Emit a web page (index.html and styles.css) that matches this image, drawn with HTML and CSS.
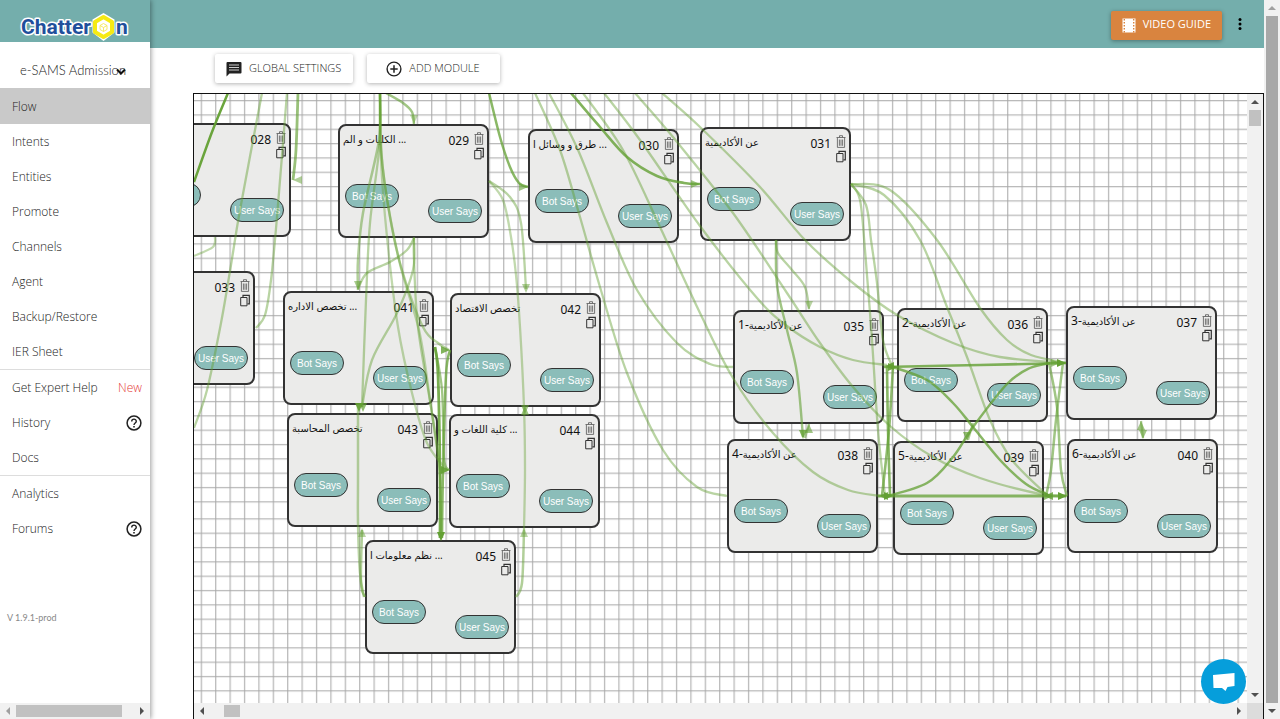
FILE: index.html
```html
<!DOCTYPE html>
<html lang="en">
<head>
<meta charset="utf-8">
<title>ChatterOn - Flow</title>
<link rel="stylesheet" href="styles.css">
</head>
<body>
<svg class="defs" aria-hidden="true">
  <symbol id="i-trash" viewBox="0 0 10 13"><path d="M0.5 2.5H9.5M3.5 2.3V0.7H6.5V2.3M1.4 2.8V12.4H8.6V2.8M3.4 4.5V10.8M5 4.5V10.8M6.6 4.5V10.8" fill="none" stroke="#555" stroke-width="0.8"/></symbol>
  <symbol id="i-copy" viewBox="0 0 10 12"><path d="M0.7 3H7V11.3H0.7Z" fill="none" stroke="#333"/><path d="M3 2.5V0.8H9.3V9.3H7.5" fill="none" stroke="#333" stroke-width="1.2"/></symbol>
  <symbol id="i-help" viewBox="0 0 16 16"><circle cx="8" cy="8" r="6.9" fill="none" stroke="#222" stroke-width="1.5"/><path d="M5.7 6.4C5.7 3.4 10.3 3.4 10.3 6.3C10.3 8 8 8 8 9.9" fill="none" stroke="#222" stroke-width="1.4"/><path d="M7.2 11H8.8V12.6H7.2Z" fill="#222"/></symbol>
</svg>
<div class="app">
  <aside class="sidebar">
    <div class="brand">
      <svg class="logo" viewBox="0 0 112 30" role="img" aria-label="ChatterOn">
        <g class="logo-text">
          <text x="72" y="22" text-anchor="end">Chatter</text>
          <text x="97" y="22">n</text>
        </g>
        <path d="M84.500 1L95.500 7.500V20.500L84.500 29L73.500 20.500V7.500Z" fill="#fff"/>
        <path d="M84.500 5L93 10V20L84.500 25L76 20V10Z" fill="#fff" stroke="#f5ea14" stroke-width="4" stroke-linejoin="round"/>
        <path d="M84.500 11.500L88 13.500V17.500L84.500 19.500L81 17.500V13.500ZM81 13.500L84.500 15.500L88 13.500M84.500 15.500V19.500" fill="none" stroke="#f5e85a" stroke-width="0.9"/>
      </svg>
    </div>
    <div class="project">
      <select class="project-select" aria-label="Project"><option>e-SAMS Admission</option></select>
      <svg class="project-arrow" viewBox="0 0 10 8" aria-hidden="true"><path d="M1 1.500L5 5.500L9 1.500" fill="none" stroke="#111" stroke-width="2"/></svg>
    </div>
    <nav class="menu">
      <a class="item active" href="#">Flow</a>
      <a class="item" href="#">Intents</a>
      <a class="item" href="#">Entities</a>
      <a class="item" href="#">Promote</a>
      <a class="item" href="#">Channels</a>
      <a class="item" href="#">Agent</a>
      <a class="item" href="#">Backup/Restore</a>
      <a class="item" href="#">IER Sheet</a>
      <a class="item ruled" href="#">Get Expert Help <span class="new">New</span></a>
      <a class="item" href="#">History <svg class="help"><use href="#i-help"/></svg></a>
      <a class="item" href="#">Docs</a>
      <a class="item ruled" href="#">Analytics</a>
      <a class="item" href="#">Forums <svg class="help"><use href="#i-help"/></svg></a>
    </nav>
    <p class="version">V 1.9.1-prod</p>
    <div class="hbar"><i class="arrow left dim"></i><div class="track"><div class="thumb wide"></div></div><i class="arrow right"></i></div>
  </aside>

  <div class="page">
    <header class="topbar">
      <button class="video" type="button">
        <svg class="film" viewBox="0 0 14 15" aria-hidden="true"><path d="M0.500 0.500H13.500V14.500H0.500Z" fill="#fff"/><path d="M2.300 1V14.500M11.700 1V14.500" stroke="#d9843f" stroke-width="1.400" stroke-dasharray="1.400 1.600"/></svg>
        <span class="video-label">VIDEO GUIDE</span>
      </button>
      <button class="more" type="button" aria-label="More"><svg class="dots" viewBox="0 0 4 12"><circle cx="2" cy="1.500" r="1.500"/><circle cx="2" cy="6" r="1.500"/><circle cx="2" cy="10.500" r="1.500"/></svg></button>
    </header>
    <div class="toolbar">
      <button class="tool" type="button">
        <svg class="tool-icon" viewBox="0 0 16 16" aria-hidden="true"><path d="M1.500 1H14.500Q15.500 1 15.500 2V11.500Q15.500 12.500 14.500 12.500H3.500L0.500 15.500V2Q0.500 1 1.500 1Z" fill="#222"/><path d="M3 4H13M3 6.500H13M3 9H13" stroke="#ccc" stroke-width="1.200"/></svg>
        <span class="tool-label">GLOBAL SETTINGS</span>
      </button>
      <button class="tool second" type="button">
        <svg class="tool-icon" viewBox="0 0 16 16" aria-hidden="true"><circle cx="8" cy="8" r="6.900" fill="none" stroke="#222" stroke-width="1.400"/><path d="M8 4.300V11.700M4.300 8H11.700" stroke="#222" stroke-width="1.500"/></svg>
        <span class="tool-label">ADD MODULE</span>
      </button>
    </div>
    <main class="canvas-frame">
      <div class="canvas-row">
        <div class="canvas" id="canvas">
          <svg class="layer" aria-hidden="true">
            <defs>
              <pattern id="cols" patternUnits="userSpaceOnUse" x="6.700" width="14.400" height="20"><path d="M0.700 0V20" stroke="#a6a6a6"/></pattern>
              <pattern id="rows" patternUnits="userSpaceOnUse" y="6" width="20" height="14.330"><path d="M0 0.700H20" stroke="#a6a6a6"/></pattern>
              <pattern id="rows-low" patternUnits="userSpaceOnUse" y="8.700" width="20" height="14.330"><path d="M0 0.700H20" stroke="#a6a6a6"/></pattern>
            </defs>
            <rect width="100%" height="100%" fill="url(#cols)"/>
            <rect width="100%" height="414" fill="url(#rows)"/>
            <rect y="422" width="100%" height="100%" fill="url(#rows-low)"/>
          </svg>
          <div id="nodes"></div>
          <svg class="layer" aria-hidden="true"><g id="edges" transform="translate(-194 -94)"></g></svg>
        </div>
        <div class="vbar"><i class="arrow up"></i><div class="track"><div class="thumb small"></div></div><i class="arrow down"></i></div>
      </div>
      <div class="hbar inner"><i class="arrow left"></i><div class="track"><div class="thumb small"></div></div><i class="arrow right"></i><span class="corner"></span></div>
    </main>
  </div>
  <div class="vbar outer"><i class="arrow up dim"></i><div class="track"><div class="thumb full"></div></div><i class="arrow down"></i></div>
</div>
<button class="chat" type="button" aria-label="Chat"><svg class="chat-icon" viewBox="0 0 24 20"><path d="M1 3L22.500 1V14L15.500 15L13.500 19L10 16L1.500 16Z" fill="#fff"/></svg></button>
<script src="flow.js"></script>
</body>
</html>
```
FILE: styles.css
```css
* { box-sizing: border-box; }
body { margin: 0; font-family: Lato, "Open Sans", sans-serif; font-size: 14px; color: #444; background: #fff; overflow: hidden; }
button { font: inherit; border: 0; padding: 0; cursor: pointer; }
.defs { position: absolute; width: 0; height: 0; }
.app { display: flex; height: 100vh; }

.sidebar { flex: none; width: 150px; display: flex; flex-direction: column; background: #fff; box-shadow: 1px 0 5px rgba(0,0,0,.4); z-index: 2; }
.brand { height: 42px; background: #74aeac; padding: 12px 0 0 19px; }
.logo { display: block; width: 112px; height: 30px; overflow: visible; }
.logo-text { font: 700 21px Roboto, sans-serif; fill: #1f4f9c; stroke: #fff; stroke-width: 3px; paint-order: stroke; stroke-linejoin: round; }
.project { position: relative; height: 46px; padding: 17px 20px 0; }
.project-select { appearance: none; border: 0; padding: 0; background: none; width: 110px; height: 22px; font: 300 13px Lato, sans-serif; color: #222; }
.project-arrow { position: absolute; right: 24px; top: 26px; width: 10px; height: 8px; }
.menu { display: flex; flex-direction: column; }
.item { display: flex; align-items: center; justify-content: space-between; height: 35px; padding: 0 8px 0 12px; color: #222; text-decoration: none; font: 300 12px "Open Sans", sans-serif; white-space: nowrap; }
.item.active { height: 36px; background: #c9c9c9; }
.item.ruled { height: 36px; border-top: 1px solid #ddd; }
.new { color: #e53935; }
.help { width: 16px; height: 16px; }
.version { margin: 64px 0 0 7px; font-size: 9px; line-height: 16px; color: #888; }

.hbar, .vbar { display: flex; background: #f1f1f1; flex: none; }
.hbar { height: 16px; align-items: center; }
.sidebar .hbar { margin-top: auto; }
.vbar { width: 16px; flex-direction: column; align-items: center; }
.track { flex: 1; }
.arrow { flex: none; width: 16px; height: 16px; display: grid; place-items: center; }
.arrow::after { content: ""; border: 4px solid transparent; }
.arrow.left::after { border-right-color: #505050; border-left-width: 0; }
.arrow.right::after { border-left-color: #505050; border-right-width: 0; }
.arrow.up::after { border-bottom-color: #505050; border-top-width: 0; }
.arrow.down::after { border-top-color: #505050; border-bottom-width: 0; }
.arrow.dim { opacity: .5; }
.thumb { background: #c1c1c1; width: 12px; height: 12px; }
.thumb.wide { width: 90%; }
.hbar .small { width: 16px; margin-left: 14px; }
.vbar .small { height: 16px; }
.thumb.full { height: 100%; background: #a8a8a8; }
.corner { width: 16px; height: 16px; background: #dcdcdc; }

.page { flex: 1; min-width: 0; display: flex; flex-direction: column; }
.topbar { height: 48px; flex: none; background: #74aeac; display: flex; justify-content: flex-end; align-items: flex-start; padding: 11px 19px 0 0; gap: 13px; }
.video { display: flex; align-items: center; gap: 7px; height: 29px; padding: 0 11px; background: #d9843f; color: #fff; border-radius: 2px; box-shadow: 0 1px 4px rgba(0,0,0,.35); }
.video-label { font: 11px/26px "Open Sans", sans-serif; align-self: flex-start; }
.film { width: 14px; height: 15px; }
.more { background: none; width: 10px; height: 26px; }
.dots { width: 4px; height: 12px; }
.toolbar { display: flex; gap: 14px; padding: 6px 0 10px 65px; }
.tool { display: flex; align-items: center; gap: 7px; height: 29px; padding: 0 12px 0 11px; background: #fff; border-radius: 2px; box-shadow: 0 1px 4px rgba(0,0,0,.3); }
.tool.second { padding: 0 20px 0 19px; }
.tool-icon { width: 16px; height: 16px; }
.tool-label { font: 300 11px/27px "Open Sans", sans-serif; color: #222; align-self: flex-start; }

.canvas-frame { flex: 1; min-height: 0; margin-left: 43px; border: 1px solid #111; border-bottom: 0; display: flex; flex-direction: column; }
.canvas-row { flex: 1; min-height: 0; display: flex; }
.canvas { flex: 1; position: relative; overflow: hidden; }
.layer { position: absolute; inset: 0; width: 100%; height: 100%; pointer-events: none; }

.node { position: absolute; width: 151px; height: 114px; border: 2px solid #333; border-radius: 8px; background: #ebebea; padding: 6px 3px 0 3px; }
.node-head { display: flex; align-items: flex-start; height: 52px; font: 12px/18px "Noto Sans", "DejaVu Sans", sans-serif; color: #111; }
.node-title { flex: 1; white-space: nowrap; font-size: 10px; line-height: 14px; }
.node-index { font-size: 12px; }
.node-tools { display: flex; flex-direction: column; gap: 2px; margin-left: 5px; }
.node-tool { width: 10px; height: 13px; background: none; display: block; }
.node-tool svg { display: block; width: 10px; height: 13px; }
.pills { display: flex; justify-content: space-between; align-items: flex-start; padding: 0 2px 0 2px; }
.pill { width: 54px; height: 24px; border: 1px solid #333; border-radius: 12px; background: #8bbdb9; color: #fff; font: 10px "Liberation Sans", sans-serif; white-space: nowrap; }
.pill.user { margin-top: 15px; }

.chat { position: absolute; right: 34px; bottom: 15px; width: 45px; height: 45px; border-radius: 50%; background: #069edb; display: grid; place-items: center; z-index: 3; }
.chat-icon { width: 24px; height: 20px; }
```
FILE: flow.js
```js
const nodes = [
  ["028", "", 140, 123], ["029", "الكليات و الم ...", 338, 124], ["030", "طرق و وسائل ا ...", 528, 129],
  ["031", "عن الأكاديمية", 700, 127], ["033", "", 104, 271], ["041", "تخصص الاداره ...", 283, 291],
  ["042", "تخصص الاقتصاد", 450, 293], ["043", "تخصص المحاسبة", 287, 413], ["044", "كلية اللغات و ...", 449, 414],
  ["045", "نظم معلومات ا ...", 365, 540], ["035", "عن الأكاديمية-1", 733, 310], ["036", "عن الأكاديمية-2", 897, 308],
  ["037", "عن الأكاديمية-3", 1066, 306], ["038", "عن الأكاديمية-4", 727, 439], ["039", "عن الأكاديمية-5", 893, 441],
  ["040", "عن الأكاديمية-6", 1067, 439]
];
// Canvas origin in flow coordinates
const ox = 194, oy = 94;
document.getElementById("nodes").innerHTML = nodes.map(([id, title, x, y]) => `
  <section class="node" style="left:${x - ox}px;top:${y - oy}px">
    <div class="node-head"><span class="node-title">${title.replace(/-\d/, m => `<span class="node-index">${m}</span>`)}</span><span>${id}</span>
      <div class="node-tools">
        <button class="node-tool" type="button" aria-label="Delete"><svg><use href="#i-trash"/></svg></button>
        <button class="node-tool" type="button" aria-label="Copy"><svg><use href="#i-copy"/></svg></button>
      </div>
    </div>
    <div class="pills"><button class="pill" type="button" aria-label="Bot Says">${x < ox ? "" : "Bot Says"}</button><button class="pill user" type="button">User Says</button></div>
  </section>`).join("");

// Each edge: opacity, width, then points the curve runs through
const edges = [
  [.95, 2.5, 228,93, 212,132, 194,182],
  [.45, 2.3, 262,93, 240,210, 231,265, 221,323, 207,390, 194,428],
  [.45, 2.3, 287,93, 277,217, 271,280, 265,315, 256,328],
  [.65, 2.8, 298,93, 296,150, 293,180],
  [.4, 2.3, 215,237, 213,247, 194,256],
  [.5, 2.5, 380,93, 379,140, 363,213, 358,260, 358,290],
  [.45, 2.3, 380,93, 379,150, 370,223, 366,300, 362,407],
  [.4, 2.3, 380,93, 381,160, 387,237, 398,327, 412,393, 427,443, 447,470],
  [.45, 2.4, 380,93, 381,150, 390,217, 402,270, 423,327, 438,343, 449,350],
  [.4, 2.4, 380,93, 383,170, 399,260, 419,330, 430,400, 440,475, 441,540],
  [.45, 2.3, 414,237, 414,260, 418,327, 431,407, 441,473],
  [.45, 2.3, 414,238, 407,250, 390,262, 367,273, 358,289],
  [.45, 2.3, 414,238, 413,270, 397,313, 372,360, 362,407],
  [.6, 2.5, 386,93, 403,103, 412,112, 414,124],
  [.75, 2.5, 489,93, 500,137, 510,167, 519,183, 528,187],
  [.4, 2.3, 489,181, 503,200, 511,237, 516,275, 520,327, 524,407, 525,470, 524,530],
  [.45, 2.3, 489,181, 510,197, 521,223, 526,289],
  [.5, 2.5, 365,597, 361,583, 362,530],
  [.45, 2.5, 358,404, 358,480, 358,523, 360,573, 364,597],
  [.5, 2.5, 516,597, 522,583, 524,530],
  [.85, 2.8, 435,347, 438,375, 440,473, 440,538],
  [.75, 2.5, 450,350, 446,375, 443,473, 442,538],
  [.6, 2.3, 435,347, 442,390, 444,458, 449,470],
  [.8, 2.6, 571,93, 600,127, 627,157, 657,176, 684,183, 700,184],
  [.45, 2.3, 535,93, 560,150, 580,217, 600,287, 627,373, 663,450, 697,487, 727,496],
  [.45, 2.3, 549,93, 578,150, 607,223, 637,290, 677,343, 710,364, 733,367],
  [.45, 2.3, 583,93, 623,150, 660,227, 700,313, 733,378, 773,433, 813,472, 848,490, 880,496],
  [.45, 2.3, 604,93, 640,140, 700,226, 757,298, 787,326, 820,347, 853,360, 887,365],
  [.45, 2.3, 635,93, 673,137, 733,213, 787,293, 820,343, 853,387, 890,426, 933,457, 980,478, 1040,494, 1067,496],
  [.45, 2.3, 662,93, 700,127, 760,187, 805,240, 853,283, 897,315, 953,343, 1000,357, 1066,363],
  [.45, 2.3, 776,240, 778,253, 792,270, 805,287, 809,309],
  [.6, 2.4, 776,240, 777,285, 787,330, 797,373, 803,437],
  [.45, 2.3, 851,184, 860,200, 865,250, 872,340, 878,430, 885,496],
  [.45, 2.3, 851,184, 866,205, 871,240, 877,283, 883,340, 892,366],
  [.45, 2.3, 851,184, 884,195, 920,240, 947,307, 967,357, 990,420, 1012,460, 1047,495],
  [.45, 2.3, 851,184, 890,190, 937,240, 980,308, 1007,340, 1031,355, 1066,363],
  [.8, 2.6, 884,367, 980,365, 1066,363],
  [.75, 2.5, 890,366, 927,380, 953,403, 973,427, 1000,460, 1026,484, 1048,495],
  [.75, 2.5, 884,497, 927,483, 953,457, 973,427, 1007,384, 1030,368, 1050,363],
  [.75, 2.6, 887,367, 888,430, 890,496], [.7, 2.6, 893,367, 889,430, 882,496],
  [.75, 2.8, 878,496, 980,496, 1066,496],
  [.6, 2.5, 1049,363, 1057,407, 1061,470, 1067,496],
  [.6, 2.5, 1063,363, 1056,420, 1051,470, 1046,496],
  [.5, 2.3, 973,423, 968,440], [.5, 2.3, 1141,421, 1143,438], [.5, 2.3, 809,424, 805,438]
];
// Arrowheads: tip x, tip y, direction in degrees, opacity
const heads = [
  [293,180,180,.5], [358,290,90,.55], [359,412,90,.9], [363,412,90,.7], [414,124,90,.4], [526,293,90,.5],
  [525,406,270,.6], [525,414,90,.6], [528,187,0,.6], [362,528,270,.45], [524,528,270,.45], [441,541,90,1],
  [450,350,0,.8], [450,470,0,.9], [700,184,0,.6], [809,310,90,.45], [803,439,90,.8], [809,424,270,.6],
  [885,366,180,.9], [897,367,0,.9], [879,496,180,.8], [893,496,0,.9], [1066,363,0,1], [1060,363,0,.6],
  [1067,496,0,1], [1044,496,180,.8], [1053,496,0,.7], [967,441,90,.7], [1143,439,90,.6], [1141,421,270,.6]
];
// Catmull-Rom spline through the points, as cubic segments
function curve(p) {
  const at = i => { const k = Math.max(0, Math.min(p.length / 2 - 1, i)); return [p[2 * k], p[2 * k + 1]]; };
  let d = `M${p[0]} ${p[1]}`;
  for (let i = 0; i < p.length / 2 - 1; i++) {
    const [a, b, c, e] = [at(i - 1), at(i), at(i + 1), at(i + 2)];
    d += `C${b[0] + (c[0] - a[0]) / 6} ${b[1] + (c[1] - a[1]) / 6} ${c[0] - (e[0] - b[0]) / 6} ${c[1] - (e[1] - b[1]) / 6} ${c[0]} ${c[1]}`;
  }
  return d;
}
document.getElementById("edges").innerHTML =
  edges.map(([o, w, ...p]) => `<path d="${curve(p)}" fill="none" stroke="#63a033" stroke-width="${w}" opacity="${o}"/>`).join("") +
  heads.map(([x, y, r, o]) => `<path d="M0 0L-9 -4V4Z" transform="translate(${x} ${y}) rotate(${r})" fill="#63a033" opacity="${o}"/>`).join("");
```
